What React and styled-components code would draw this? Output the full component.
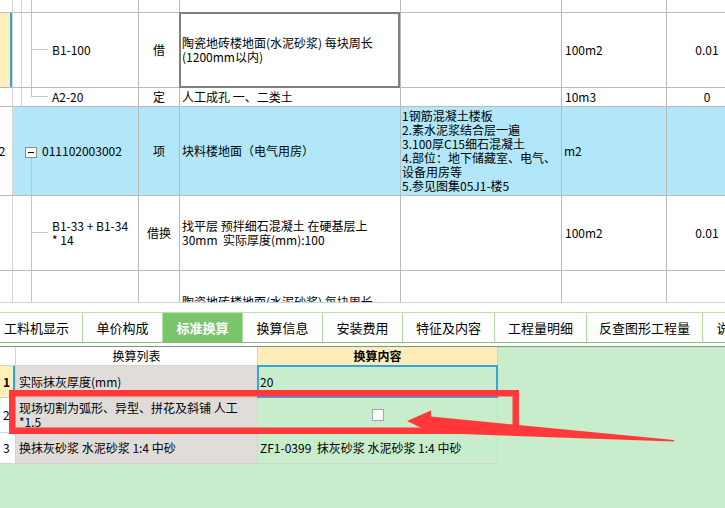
import React from 'react';
import styled, { createGlobalStyle } from 'styled-components';

const Global = createGlobalStyle`
  html, body { margin: 0; padding: 0; background: #fff; }
  body {
    font-family: "Noto Sans CJK SC", "Noto Sans", sans-serif;
    font-size: 12px;
    color: #000;
  }
`;

const Page = styled.div`
  position: relative;
  width: 725px;
  height: 508px;
  overflow: hidden;
  display: flex;
  flex-direction: column;
  background: #fff;
`;

/* ---------- upper grid ---------- */
const Grid = styled.div`
  flex: 0 0 auto;
  height: 302px;
  overflow: hidden;
  border-bottom: 1px solid #d2d2d2;
  margin-left: -8px;
`;

const Row = styled.div`
  display: flex;
  box-sizing: border-box;
  height: ${p => p.$h}px;
  border-bottom: ${p => (p.$open ? 'none' : '1px solid #b9b9b9')};
  background: ${p => p.$bg || '#fff'};
`;

const Cell = styled.div`
  position: relative;
  flex: 0 0 ${p => p.$w}px;
  box-sizing: border-box;
  border-right: 1px solid #b9b9b9;
  display: flex;
  align-items: center;
  line-height: 14px;
  white-space: pre;
`;

const NumCell = styled(Cell)`
  justify-content: center;
  border-right-color: #d6d6d6;
  background: ${p => (p.$sel ? '#ffefbb' : '#fff')};
  box-shadow: ${p => (p.$sel ? 'inset -2px 0 0 #2fa4da' : 'none')};
`;

const TreeCell = styled(Cell)`
  padding-left: ${p => p.$pl}px;
`;

const TypeCell = styled(Cell)`
  justify-content: center;
`;

const TextCell = styled(Cell)`
  padding-left: ${p => p.$pl ?? 2}px;
  ${p => (p.$clipTop != null ? `align-items: flex-start; padding-top: ${p.$clipTop}px; overflow: hidden;` : '')}
`;

const QtyCell = styled(Cell)`
  justify-content: center;
  border-right: none;
`;

const EditFrame = styled.div`
  position: absolute;
  top: -1px;
  left: -1px;
  right: 0;
  bottom: -1px;
  border: 2px solid #7f7f7f;
  pointer-events: none;
`;

const VLine = styled.span`
  position: absolute;
  left: ${p => p.$x}px;
  top: ${p => p.$top ?? 0}px;
  ${p => (p.$len != null ? `height: ${p.$len}px;` : 'bottom: 0;')}
  width: 1px;
  background: ${p => p.$c || '#c4c4c4'};
`;

const HLine = styled.span`
  position: absolute;
  left: 18px;
  top: ${p => p.$y}px;
  width: 17px;
  height: 1px;
  background: #c8c8c8;
`;

const Toggle = styled.span`
  position: absolute;
  left: 12px;
  top: ${p => p.$y}px;
  width: 12px;
  height: 11px;
  box-sizing: border-box;
  border: 1px solid #8c8c8c;
  background: #fff;
  &::after {
    content: '';
    position: absolute;
    left: 2px;
    right: 2px;
    top: 4px;
    height: 1px;
    background: #000;
  }
`;

/* ---------- tabs ---------- */
const TabBar = styled.div`
  flex: 0 0 auto;
  display: flex;
  height: 29px;
  margin: 9px 0 3px -9px;
  border-top: 1px solid #b6e4a8;
  border-bottom: 1px solid #80c46e;
  background: #fff;
`;

const Tab = styled.div`
  flex: 0 0 ${p => p.$w}px;
  box-sizing: border-box;
  display: flex;
  align-items: center;
  justify-content: center;
  border-right: 1px solid #b0e0a0;
  font-size: 13px;
  white-space: nowrap;
  background: ${p => (p.$active ? '#7cc46b' : '#fff')};
  color: ${p => (p.$active ? '#fff' : '#000')};
  font-weight: ${p => (p.$active ? 700 : 400)};
`;

/* ---------- lower panel ---------- */
const Lower = styled.div`
  flex: 1 1 auto;
  border-top: 1px solid #8b8b8b;
  background: #c7edcc;
`;

const SubTable = styled.div`
  width: 498px;
  display: flex;
  flex-direction: column;
`;

const SubRow = styled.div`
  display: grid;
  grid-template-columns: 16px 242px 240px;
  height: ${p => p.$h}px;
  box-sizing: border-box;
  border-bottom: 1px solid #d2d2d2;
`;

const SubCell = styled.div`
  position: relative;
  box-sizing: border-box;
  border-right: 1px solid #d2d2d2;
  display: flex;
  align-items: center;
  line-height: 14px;
  white-space: pre;
`;

const SubNum = styled(SubCell)`
  padding-left: 3px;
  background: ${p => (p.$sel ? '#ffefbb' : '#fff')};
  font-weight: ${p => (p.$sel ? 700 : 400)};
  box-shadow: ${p => (p.$sel ? 'inset -2px 0 0 #2fa4da' : 'none')};
`;

const HeadCell = styled(SubCell)`
  justify-content: center;
  background: ${p => (p.$yellow ? '#ffedb9' : '#fff')};
  font-weight: ${p => (p.$yellow ? 700 : 400)};
`;

const ListCell = styled(SubCell)`
  padding-left: 3px;
  background: #e0dcd9;
`;

const ValueCell = styled(SubCell)`
  padding-left: 2px;
  justify-content: ${p => (p.$center ? 'center' : 'flex-start')};
`;

const SelFrame = styled.div`
  position: absolute;
  top: -1px;
  left: -1px;
  right: -1px;
  bottom: -1px;
  border: 2px solid #33a7da;
  pointer-events: none;
`;

const CheckBox = styled.span`
  width: 12px;
  height: 12px;
  box-sizing: border-box;
  border: 1px solid #a6a6a6;
  background: #fff;
  margin-left: -2px;
`;

const Annotation = styled.svg`
  position: absolute;
  left: 0;
  top: 0;
  width: 725px;
  height: 508px;
  pointer-events: none;
`;

const W = { num: 21, tree: 126, type: 41, name: 221, feat: 161, unit: 105, qty: 80 };

const tabs = [
  ['工料机显示', 92],
  ['单价构成', 80],
  ['标准换算', 80, true],
  ['换算信息', 80],
  ['安装费用', 80],
  ['特征及内容', 92],
  ['工程量明细', 92],
  ['反查图形工程量', 116],
  ['说明信息', 80],
];

export default function App() {
  return (
    <Page>
      <Global />
      <Grid>
        <Row $h={13}>
          <NumCell $w={W.num} />
          <TreeCell $w={W.tree} $pl={39}>
            <VLine $x={8} $c="#d4d4d4" />
            <VLine $x={18} />
          </TreeCell>
          <TypeCell $w={W.type} />
          <TextCell $w={W.name} />
          <TextCell $w={W.feat} />
          <TextCell $w={W.unit} />
          <QtyCell $w={W.qty} />
        </Row>

        <Row $h={75}>
          <NumCell $w={W.num} $sel />
          <TreeCell $w={W.tree} $pl={39}>
            <VLine $x={8} $c="#d4d4d4" />
            <VLine $x={18} />
            <HLine $y={36} />
            B1-100
          </TreeCell>
          <TypeCell $w={W.type}>借</TypeCell>
          <TextCell $w={W.name}>
            {'陶瓷地砖楼地面(水泥砂浆) 每块周长\n(1200mm以内)'}
            <EditFrame />
          </TextCell>
          <TextCell $w={W.feat} />
          <TextCell $w={W.unit} $pl={3}>100m2</TextCell>
          <QtyCell $w={W.qty}>0.01</QtyCell>
        </Row>

        <Row $h={19}>
          <NumCell $w={W.num} />
          <TreeCell $w={W.tree} $pl={39}>
            <VLine $x={8} $c="#d4d4d4" />
            <VLine $x={18} $len={9} />
            <HLine $y={8} />
            A2-20
          </TreeCell>
          <TypeCell $w={W.type}>定</TypeCell>
          <TextCell $w={W.name}>人工成孔 一、二类土</TextCell>
          <TextCell $w={W.feat} />
          <TextCell $w={W.unit} $pl={3}>10m3</TextCell>
          <QtyCell $w={W.qty}>0</QtyCell>
        </Row>

        <Row $h={89} $bg="#b2e6f9">
          <NumCell $w={W.num}>2</NumCell>
          <TreeCell $w={W.tree} $pl={29}>
            <Toggle $y={40} />
            <VLine $x={18} $top={51} />
            011102003002
          </TreeCell>
          <TypeCell $w={W.type}>项</TypeCell>
          <TextCell $w={W.name}>块料楼地面（电气用房）</TextCell>
          <TextCell $w={W.feat} $pl={1}>
            {'1钢筋混凝土楼板\n2.素水泥浆结合层一遍\n3.100厚C15细石混凝土\n4.部位：地下储藏室、电气、\n设备用房等\n5.参见图集05J1-楼5'}
          </TextCell>
          <TextCell $w={W.unit} $pl={2}>m2</TextCell>
          <QtyCell $w={W.qty} />
        </Row>

        <Row $h={75}>
          <NumCell $w={W.num} />
          <TreeCell $w={W.tree} $pl={39}>
            <VLine $x={18} />
            <HLine $y={36} />
            {'B1-33 + B1-34\n* 14'}
          </TreeCell>
          <TypeCell $w={W.type}>借换</TypeCell>
          <TextCell $w={W.name}>
            {'找平层 预拌细石混凝土 在硬基层上\n30mm  实际厚度(mm):100'}
          </TextCell>
          <TextCell $w={W.feat} />
          <TextCell $w={W.unit} $pl={3}>100m2</TextCell>
          <QtyCell $w={W.qty}>0.01</QtyCell>
        </Row>

        <Row $h={31} $open>
          <NumCell $w={W.num} />
          <TreeCell $w={W.tree} $pl={39}>
            <VLine $x={18} />
          </TreeCell>
          <TypeCell $w={W.type} />
          <TextCell $w={W.name} $clipTop={24}>陶瓷地砖楼地面(水泥砂浆) 每块周长</TextCell>
          <TextCell $w={W.feat} />
          <TextCell $w={W.unit} />
          <QtyCell $w={W.qty} />
        </Row>
      </Grid>

      <TabBar>
        {tabs.map(([label, w, active]) => (
          <Tab key={label} $w={w} $active={active}>
            {label}
          </Tab>
        ))}
      </TabBar>

      <Lower>
        <SubTable>
          <SubRow $h={19}>
            <HeadCell />
            <HeadCell>换算列表</HeadCell>
            <HeadCell $yellow>换算内容</HeadCell>
          </SubRow>
          <SubRow $h={32}>
            <SubNum $sel>1</SubNum>
            <ListCell>实际抹灰厚度(mm)</ListCell>
            <ValueCell>
              20
              <SelFrame />
            </ValueCell>
          </SubRow>
          <SubRow $h={35}>
            <SubNum>2</SubNum>
            <ListCell>{'现场切割为弧形、异型、拼花及斜铺 人工\n*1.5'}</ListCell>
            <ValueCell $center>
              <CheckBox />
            </ValueCell>
          </SubRow>
          <SubRow $h={31}>
            <SubNum>3</SubNum>
            <ListCell>换抹灰砂浆 水泥砂浆 1:4 中砂</ListCell>
            <ValueCell>{'ZF1-0399  抹灰砂浆 水泥砂浆 1:4 中砂'}</ValueCell>
          </SubRow>
        </SubTable>
      </Lower>

      <Annotation viewBox="0 0 725 508">
        <rect x="12.25" y="393.25" width="503.5" height="37.5" fill="none" stroke="#ff3939" strokeWidth="6.5" />
        <polygon
          points="407,421 431,410.5 431,416.5 674,440 674,441.5 432,433"
          fill="#ff3939"
        />
      </Annotation>
    </Page>
  );
}
